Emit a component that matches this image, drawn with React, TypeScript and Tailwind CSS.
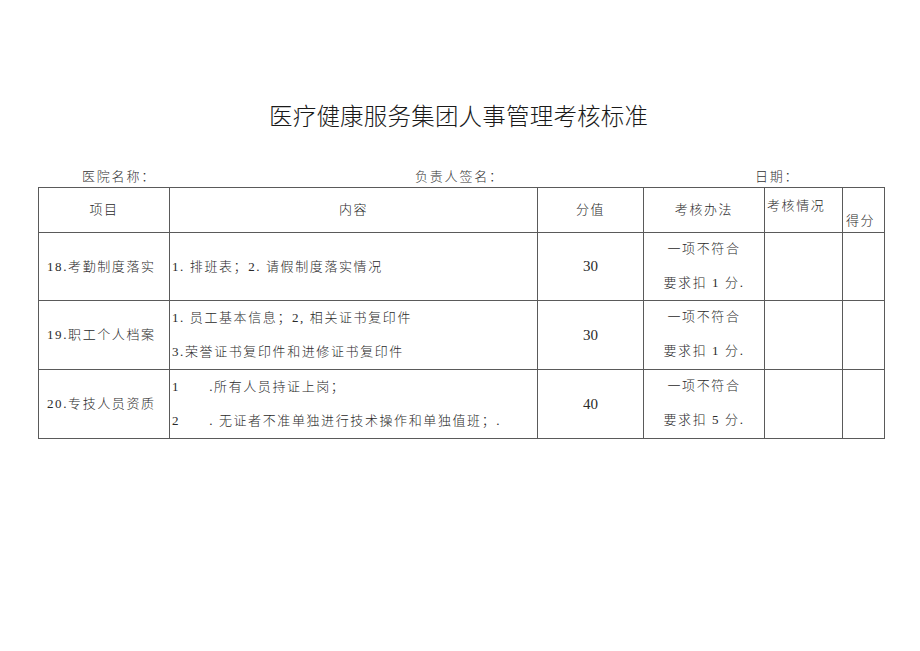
const font = { fontFamily: '"Liberation Serif", "Noto Sans CJK SC", serif' };

const rows = [
  {
    item: '18.考勤制度落实',
    lines: ['1. 排班表；2. 请假制度落实情况'],
    score: '30',
    rule: ['一项不符合', '要求扣 1 分.'],
  },
  {
    item: '19.职工个人档案',
    lines: ['1. 员工基本信息；2, 相关证书复印件', '3.荣誉证书复印件和进修证书复印件'],
    score: '30',
    rule: ['一项不符合', '要求扣 1 分.'],
  },
  {
    item: '20.专技人员资质',
    lines: ['1\u00a0\u00a0\u00a0\u00a0\u00a0\u00a0.所有人员持证上岗；', '2\u00a0\u00a0\u00a0\u00a0\u00a0\u00a0. 无证者不准单独进行技术操作和单独值班；.'],
    score: '40',
    rule: ['一项不符合', '要求扣 5 分.'],
  },
];

export default function App() {
  return (
    <div className="w-[920px] h-[651px] bg-white text-[#2a2a2a] font-light" style={font}>
      <h1 className="pt-[103px] pl-[269px] text-[23.5px] leading-[28px] font-light text-[#1a1a1a] tracking-[0.2px]">
        医疗健康服务集团人事管理考核标准
      </h1>

      <div className="flex mt-[36px] h-[20px] items-center text-[13px] tracking-[1.8px] text-[#333]">
        <span className="ml-[82px] w-[333px]">医院名称：</span>
        <span className="w-[340px]">负责人签名：</span>
        <span>日期：</span>
      </div>

      <table className="ml-[38px] w-[846px] border-collapse table-fixed text-[13px] tracking-[1.6px]">
        <colgroup>
          <col className="w-[131px]" />
          <col className="w-[368px]" />
          <col className="w-[106px]" />
          <col className="w-[121px]" />
          <col className="w-[78px]" />
          <col className="w-[42px]" />
        </colgroup>
        <thead>
          <tr className="h-[45px]">
            <th className="border border-[#5a5a5a] font-light">项目</th>
            <th className="border border-[#5a5a5a] font-light">内容</th>
            <th className="border border-[#5a5a5a] font-light">分值</th>
            <th className="border border-[#5a5a5a] font-light">考核办法</th>
            <th className="border border-[#5a5a5a] font-light align-top text-left pl-[2px] pt-[8px]">考核情况</th>
            <th className="border border-[#5a5a5a] font-light align-bottom text-left pl-[3px] pb-[2px]">得分</th>
          </tr>
        </thead>
        <tbody>
          {rows.map((r, i) => (
            <tr key={r.item} className={i === 0 ? 'h-[68px]' : 'h-[69px]'}>
              <td className="border border-[#5a5a5a] pl-[8px] whitespace-nowrap">{r.item}</td>
              <td className="border border-[#5a5a5a] pl-[2px]">
                <div className="flex flex-col gap-[14px]">
                  {r.lines.map((l) => (
                    <span key={l} className="leading-[20px] whitespace-nowrap">{l}</span>
                  ))}
                </div>
              </td>
              <td className="border border-[#5a5a5a] text-center text-[15px] tracking-normal">{r.score}</td>
              <td className="border border-[#5a5a5a] text-center">
                <div className="flex flex-col gap-[14px] leading-[20px] pb-[2px]">
                  <span>{r.rule[0]}</span>
                  <span>{r.rule[1]}</span>
                </div>
              </td>
              <td className="border border-[#5a5a5a]"></td>
              <td className="border border-[#5a5a5a]"></td>
            </tr>
          ))}
        </tbody>
      </table>
    </div>
  );
}
